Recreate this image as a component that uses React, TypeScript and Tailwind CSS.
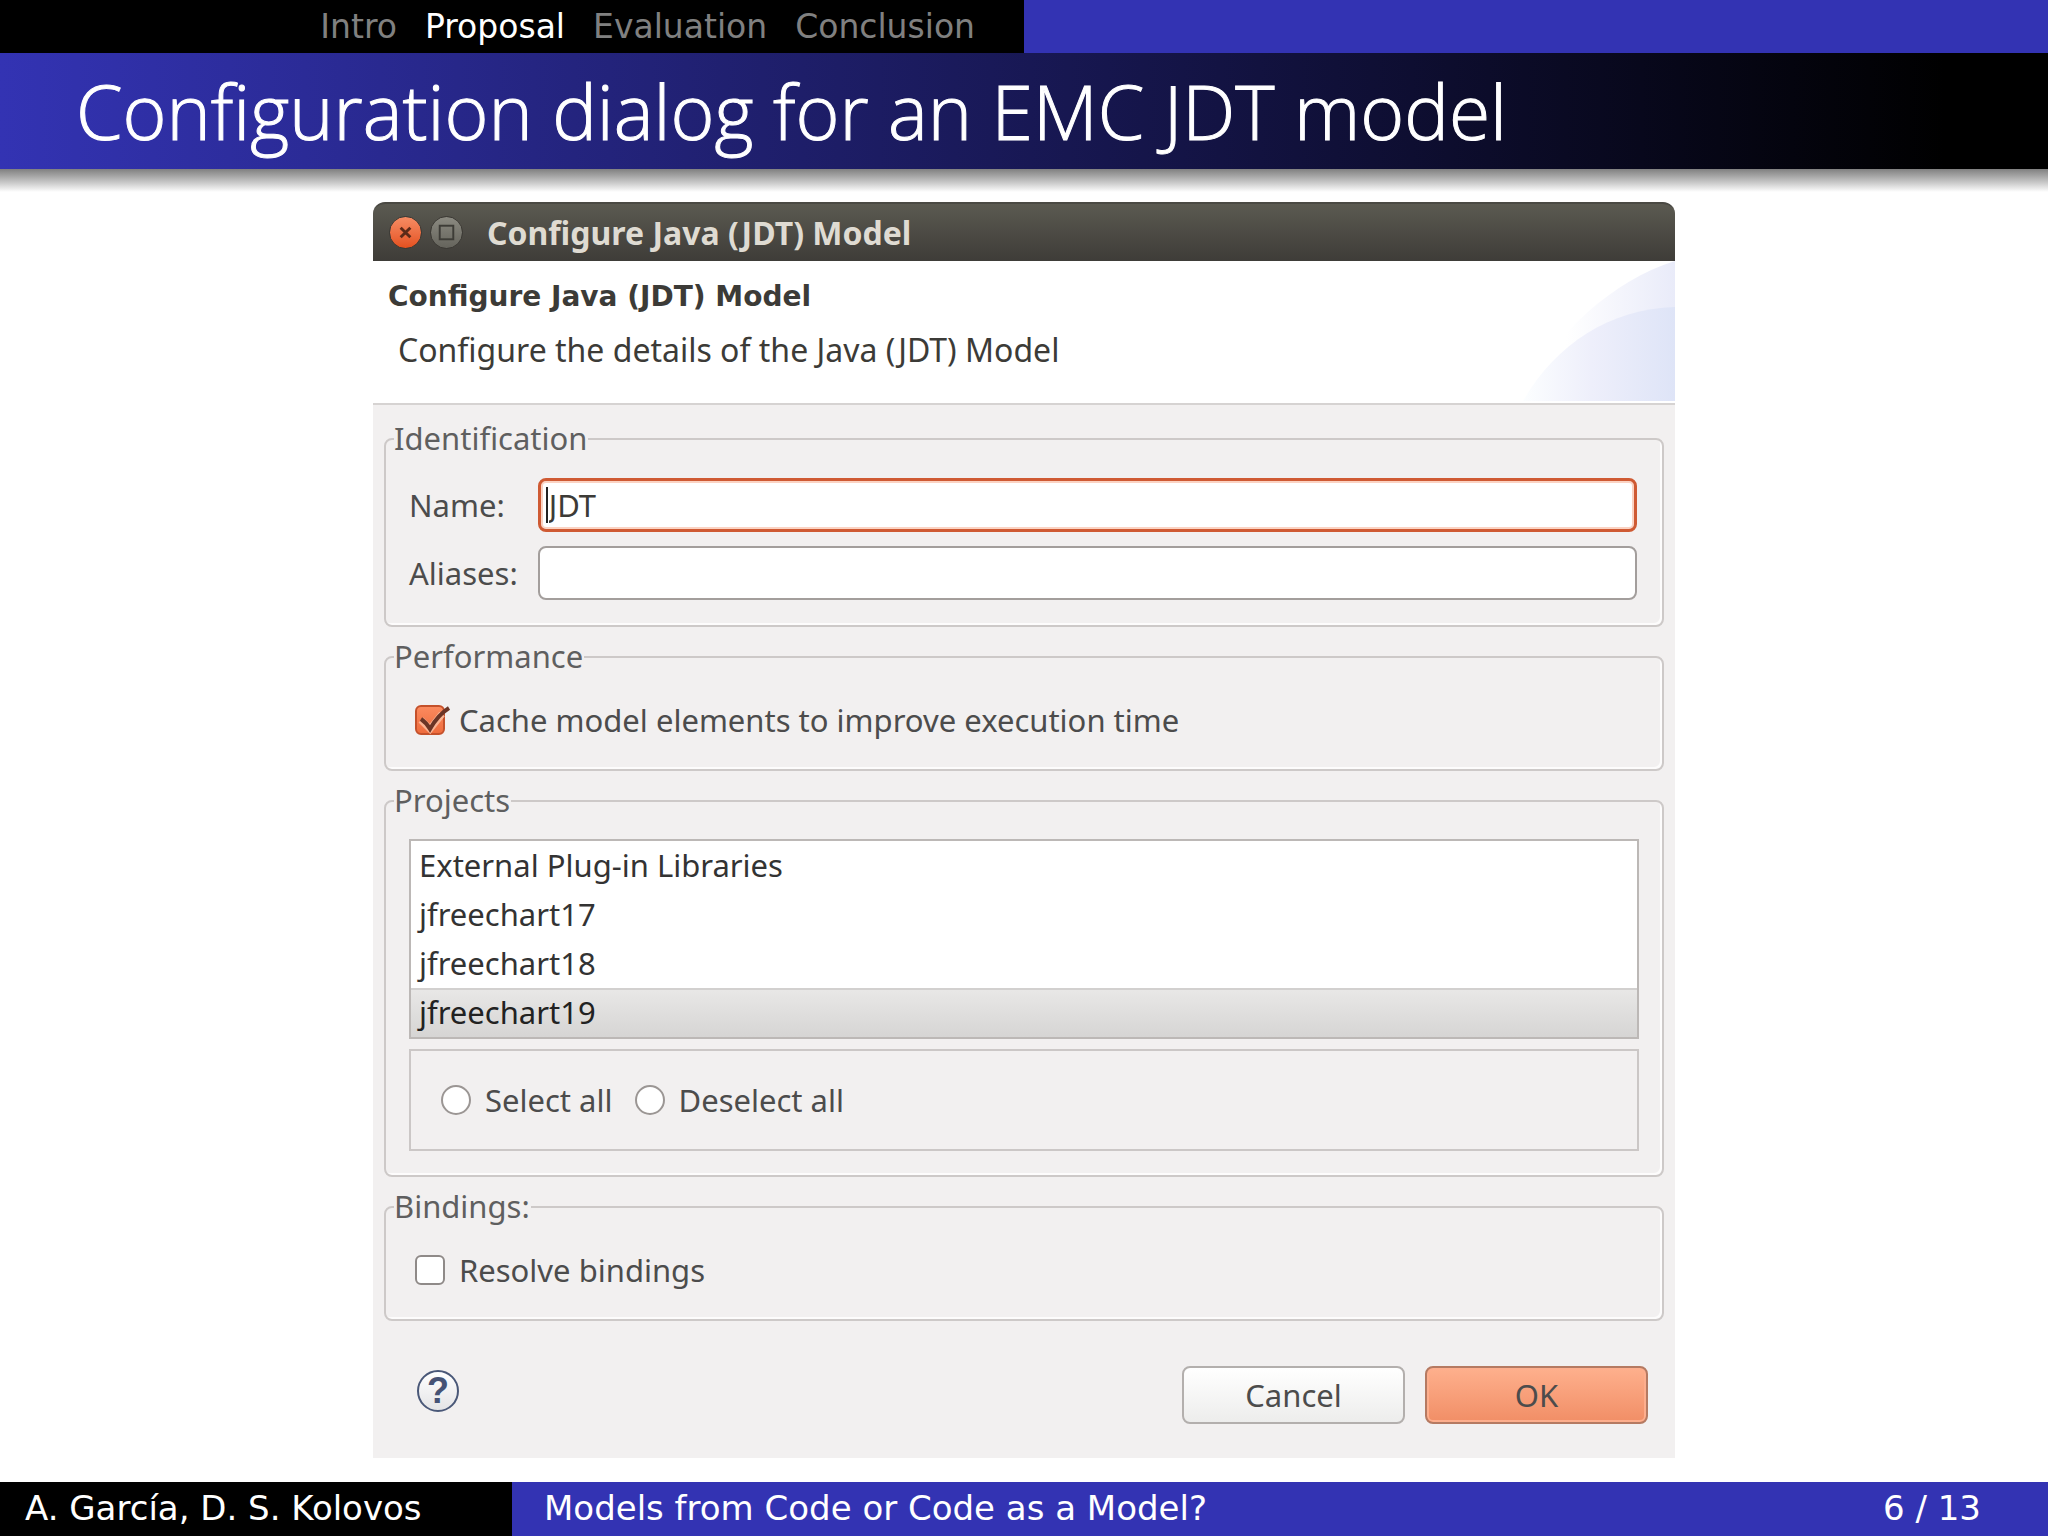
import { useState, type ReactNode } from 'react';
import clsx from 'clsx';

const sections = ['Intro', 'Proposal', 'Evaluation', 'Conclusion'];
const projects = ['External Plug-in Libraries', 'jfreechart17', 'jfreechart18', 'jfreechart19'];

function Group({ title, className, children }: { title: string; className?: string; children: ReactNode }) {
  return (
    <fieldset className="rounded-lg border-2 border-[#cdc9c8] px-2 shadow-[inset_-2px_-2px_0_#fdfcfc]">
      <legend className="h-10 pr-px leading-[38px] text-[#5f5f5f]">{title}</legend>
      <div className={clsx('px-[15px]', className)}>{children}</div>
    </fieldset>
  );
}

function Check({ label, checked, onChange }: { label: string; checked: boolean; onChange: (value: boolean) => void }) {
  return (
    <label className="ml-[6px] flex h-10 items-center gap-[14px]">
      <span className="relative size-[30px]">
        <input
          type="checkbox"
          checked={checked}
          onChange={(e) => onChange(e.target.checked)}
          className="block size-[30px] appearance-none rounded-md border-2 border-[#8f8a88] bg-white checked:border-[#c4512b] checked:bg-linear-to-b checked:from-[#fb8a5e] checked:to-[#ee6c3d]"
        />
        {checked && (
          <svg viewBox="0 0 36 30" className="pointer-events-none absolute top-0 left-0 h-[30px] w-9" fill="none">
            <path d="M6 15 L15 24 L27 9" stroke="#fbb493" strokeWidth="7" />
            <path d="M6 14 C9 16 12 19 15 24 C20 15 26 8 34 3" stroke="#6b3526" strokeWidth="4" />
          </svg>
        )}
      </span>
      {label}
    </label>
  );
}

function TitleBar() {
  return (
    <div className="flex h-[59px] items-center rounded-t-xl border-t-2 border-[#4a4943] bg-linear-to-b from-[#5b5a51] to-[#3e3c38] pl-4">
      <button type="button" aria-label="Close" className="size-[33px] rounded-full border border-[#3a3833] bg-linear-to-b from-[#f68c63] to-[#e4501d]">
        <svg viewBox="0 0 32 32" fill="none" stroke="#5c2a18" strokeWidth="3">
          <path d="M11 11 L21 21 M21 11 L11 21" />
        </svg>
      </button>
      <button type="button" aria-label="Maximize" className="ml-2 size-[33px] rounded-full border border-[#3a3833] bg-linear-to-b from-[#8b8a81] to-[#65645c]">
        <svg viewBox="0 0 32 32" fill="none" stroke="#3d3c37" strokeWidth="2">
          <rect x="9" y="9" width="14" height="14" />
        </svg>
      </button>
      <h2 className="ml-6 text-[32px] font-bold text-[#dfdbd2]">Configure Java (JDT) Model</h2>
    </div>
  );
}

function DialogHeader() {
  return (
    <div className="relative h-[144px] border-b-2 border-[#d6d3d2] bg-white">
      <svg viewBox="0 0 156 140" className="absolute top-0 right-0 h-[140px] w-[156px]">
        <defs>
          <linearGradient id="outer" x1="0" x2="1" y1="0" y2="0">
            <stop offset="0.3" stopColor="#ffffff" />
            <stop offset="1" stopColor="#e9ebf9" />
          </linearGradient>
          <linearGradient id="inner" x1="0" x2="1" y1="0" y2="0">
            <stop offset="0" stopColor="#fcfeff" />
            <stop offset="0.45" stopColor="#eeeffb" />
            <stop offset="1" stopColor="#dee4f7" />
          </linearGradient>
        </defs>
        <path d="M0 140 C30 80 90 20 156 0 L156 140 Z" fill="url(#outer)" />
        <path d="M4 140 C36 84 90 48 156 46 L156 140 Z" fill="url(#inner)" />
      </svg>
      <h3 className="relative pt-[18px] pl-[15px] font-['DejaVu_Sans',sans-serif] text-[28px] leading-9 font-bold text-[#3c3b37]">
        Configure Java (JDT) Model
      </h3>
      <p className="relative mt-[15px] pl-[25px] text-[32px] leading-10 text-[#3c3b37]">Configure the details of the Java (JDT) Model</p>
    </div>
  );
}

function Dialog() {
  const [name, setName] = useState('JDT');
  const [aliases, setAliases] = useState('');
  const [cache, setCache] = useState(true);
  const [resolve, setResolve] = useState(false);
  const [selected, setSelected] = useState('jfreechart19');

  return (
    <section className="mx-auto w-full max-w-[1302px] rounded-t-xl bg-[#f2f0f0] font-['Noto_Sans',sans-serif] text-[31px] text-[#4c4c4c]">
      <TitleBar />
      <DialogHeader />
      <form className="px-[11px]" onSubmit={(e) => e.preventDefault()}>
        <div className="flex flex-col gap-[10px] pt-[14px]">
          <Group title="Identification" className="grid grid-cols-[auto_1fr] items-center gap-x-5 gap-y-[14px] pt-[19px] pb-[25px]">
            <label htmlFor="name">Name:</label>
            <div className="relative mr-[2px]">
              <input
                id="name"
                value={name}
                onChange={(e) => setName(e.target.value)}
                className="block h-[54px] w-full rounded-lg border-[3px] border-[#cf5a33] bg-white px-2 text-[#3c3b37] shadow-[inset_0_0_0_2px_#fbd3c3] outline-none"
              />
              <span className="absolute top-[9px] left-2 h-9 w-[2px] bg-[#222]" />
            </div>
            <label htmlFor="aliases">Aliases:</label>
            <input
              id="aliases"
              value={aliases}
              onChange={(e) => setAliases(e.target.value)}
              className="mr-[2px] block h-[54px] rounded-lg border-2 border-[#a39e9c] bg-white px-2 outline-none"
            />
          </Group>
          <Group title="Performance" className="pt-[23px] pb-[29px]">
            <Check label="Cache model elements to improve execution time" checked={cache} onChange={setCache} />
          </Group>
          <Group title="Projects" className="pt-[18px] pb-6">
            <ul role="listbox" aria-label="Projects" className="border-2 border-[#bcb8b6] bg-white text-[#333]">
              {projects.map((project) => (
                <li
                  key={project}
                  role="option"
                  aria-selected={project === selected}
                  onClick={() => setSelected(project)}
                  className={clsx(
                    'h-[49px] pl-2 leading-[49px]',
                    project === selected && 'bg-linear-to-b from-[#e9e8e7] to-[#d6d5d4] text-[#222] shadow-[inset_0_2px_0_#d2d0cf]',
                  )}
                >
                  {project}
                </li>
              ))}
            </ul>
            <div className="mt-[10px] flex h-[102px] items-center gap-[22px] border-2 border-[#cbc7c6] pl-[30px]">
              {['Select all', 'Deselect all'].map((text) => (
                <label key={text} className="flex items-center gap-[14px]">
                  <input type="radio" name="selection" className="size-[30px] appearance-none rounded-full border-2 border-[#9b9694] bg-white checked:bg-[#ee6c3d]" />
                  {text}
                </label>
              ))}
            </div>
          </Group>
          <Group title="Bindings:" className="pt-[23px] pb-[29px]">
            <Check label="Resolve bindings" checked={resolve} onChange={setResolve} />
          </Group>
        </div>
        <div className="flex items-start gap-5 pt-[45px] pr-4 pb-[34px] pl-[33px]">
          <button
            type="button"
            aria-label="Help"
            className="mt-1 mr-auto size-[42px] rounded-full border-2 border-[#4a5878] bg-linear-to-b from-white to-[#e4e4e6] font-['Liberation_Sans',sans-serif] text-[36px] leading-9 font-bold text-[#465375]"
          >
            ?
          </button>
          <button type="button" className="h-[58px] w-[223px] rounded-lg border-2 border-[#b3afad] bg-linear-to-b from-white to-[#ededec]">
            Cancel
          </button>
          <button
            type="submit"
            className="h-[58px] w-[223px] rounded-lg border-2 border-[#b57a62] bg-linear-to-b from-[#feb08d] to-[#f18e66] shadow-[inset_0_0_0_2px_#fdae8d]"
          >
            OK
          </button>
        </div>
      </form>
    </section>
  );
}

export default function App() {
  return (
    <div className="flex min-h-screen flex-col bg-white font-['DejaVu_Sans',sans-serif]">
      <nav className="grid h-[53px] grid-cols-2 bg-[#3333b3]">
        <div className="flex items-center justify-end gap-7 bg-black pr-[49px] text-[33px]">
          {sections.map((section) => (
            <a key={section} href={`#${section.toLowerCase()}`} className={section === 'Proposal' ? 'text-white' : 'text-[#808080]'}>
              {section}
            </a>
          ))}
        </div>
      </nav>
      <header className="flex h-[116px] items-center bg-linear-to-r/srgb from-[#3333b3] to-black to-95% pl-[76px]">
        <h1 className="font-['Open_Sans',sans-serif] text-[75px] leading-none font-light text-white [-webkit-text-stroke:1px_white]">
          Configuration dialog for an EMC JDT model
        </h1>
      </header>
      <div className="h-[23px] bg-linear-to-b from-[#808080] to-white" />
      <main className="pt-[10px] pb-6">
        <Dialog />
      </main>
      <footer className="mt-auto grid h-[55px] grid-cols-4 items-stretch text-[34px] leading-[52px] text-white">
        <div className="bg-black pl-[25px]">A. García, D. S. Kolovos</div>
        <div className="col-span-3 flex justify-between bg-[#3333b3] pr-[67px] pl-8">
          <span>Models from Code or Code as a Model?</span>
          <span>6 / 13</span>
        </div>
      </footer>
    </div>
  );
}
